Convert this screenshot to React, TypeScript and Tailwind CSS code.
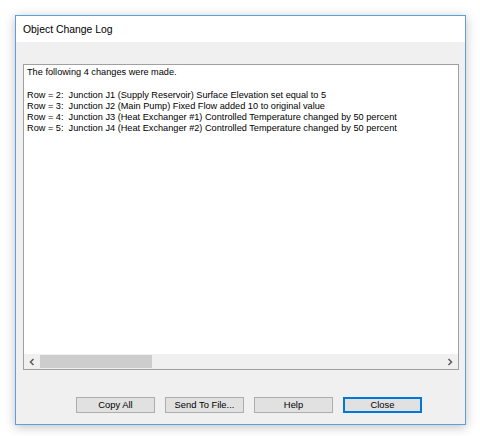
import React from 'react';

const lines = [
  'The following 4 changes were made.',
  '',
  'Row = 2:  Junction J1 (Supply Reservoir) Surface Elevation set equal to 5',
  'Row = 3:  Junction J2 (Main Pump) Fixed Flow added 10 to original value',
  'Row = 4:  Junction J3 (Heat Exchanger #1) Controlled Temperature changed by 50 percent',
  'Row = 5:  Junction J4 (Heat Exchanger #2) Controlled Temperature changed by 50 percent',
];

function DialogButton({ label, isDefault }: { label: string; isDefault?: boolean }) {
  return (
    <button
      className={
        isDefault
          ? 'w-[79px] h-[16px] bg-[#e1e1e1] border-2 border-[#0078d7] text-[9.4px] leading-none text-black flex items-center justify-center'
          : 'w-[79px] h-[16px] bg-[#e1e1e1] border border-[#adadad] text-[9.4px] leading-none text-black flex items-center justify-center'
      }
    >
      {label}
    </button>
  );
}

export default function App() {
  return (
    <div
      className="w-[480px] h-[436px] bg-white pt-[15px] pl-[15px]"
      style={{ fontFamily: '"Liberation Sans", Arial, sans-serif' }}
    >
      <div className="w-[451px] h-[410px] border border-[#5b9fdc] flex flex-col shadow-[0_2px_10px_rgba(0,0,0,0.25)]">
        {/* Title bar */}
        <div className="h-[26px] bg-white flex items-center pl-[7px] pt-[1px]">
          <span className="text-[10.4px] text-black">Object Change Log</span>
        </div>

        {/* Client area */}
        <div className="flex-1 bg-[#f0f0f0] flex flex-col pt-[22px] pl-[7px]">
          <div className="w-[436px] h-[306px] bg-white border border-[#a0a0a0] flex flex-col">
            <div className="flex-1 pl-[3px] pt-[2px] text-[9.2px] leading-[11.3px] text-black whitespace-pre overflow-hidden">
              {lines.map((l, i) => (
                <div key={i} className="h-[11.3px]">{l}</div>
              ))}
            </div>
            {/* Horizontal scrollbar */}
            <div className="h-[15px] bg-[#f0f0f0] flex items-center">
              <div className="w-[16px] h-full flex items-center justify-center">
                <svg width="6" height="8" viewBox="0 0 6 8">
                  <path d="M4.5 1 L1.5 4 L4.5 7" fill="none" stroke="#606060" strokeWidth="1.6" />
                </svg>
              </div>
              <div className="w-[112px] h-[13px] bg-[#cdcdcd]" />
              <div className="flex-1" />
              <div className="w-[16px] h-full flex items-center justify-center">
                <svg width="6" height="8" viewBox="0 0 6 8">
                  <path d="M1.5 1 L4.5 4 L1.5 7" fill="none" stroke="#606060" strokeWidth="1.6" />
                </svg>
              </div>
            </div>
          </div>

          <div className="flex gap-[10px] pl-[53px] mt-[27px]">
            <DialogButton label="Copy All" />
            <DialogButton label="Send To File..." />
            <DialogButton label="Help" />
            <DialogButton label="Close" isDefault />
          </div>
        </div>
      </div>
    </div>
  );
}
